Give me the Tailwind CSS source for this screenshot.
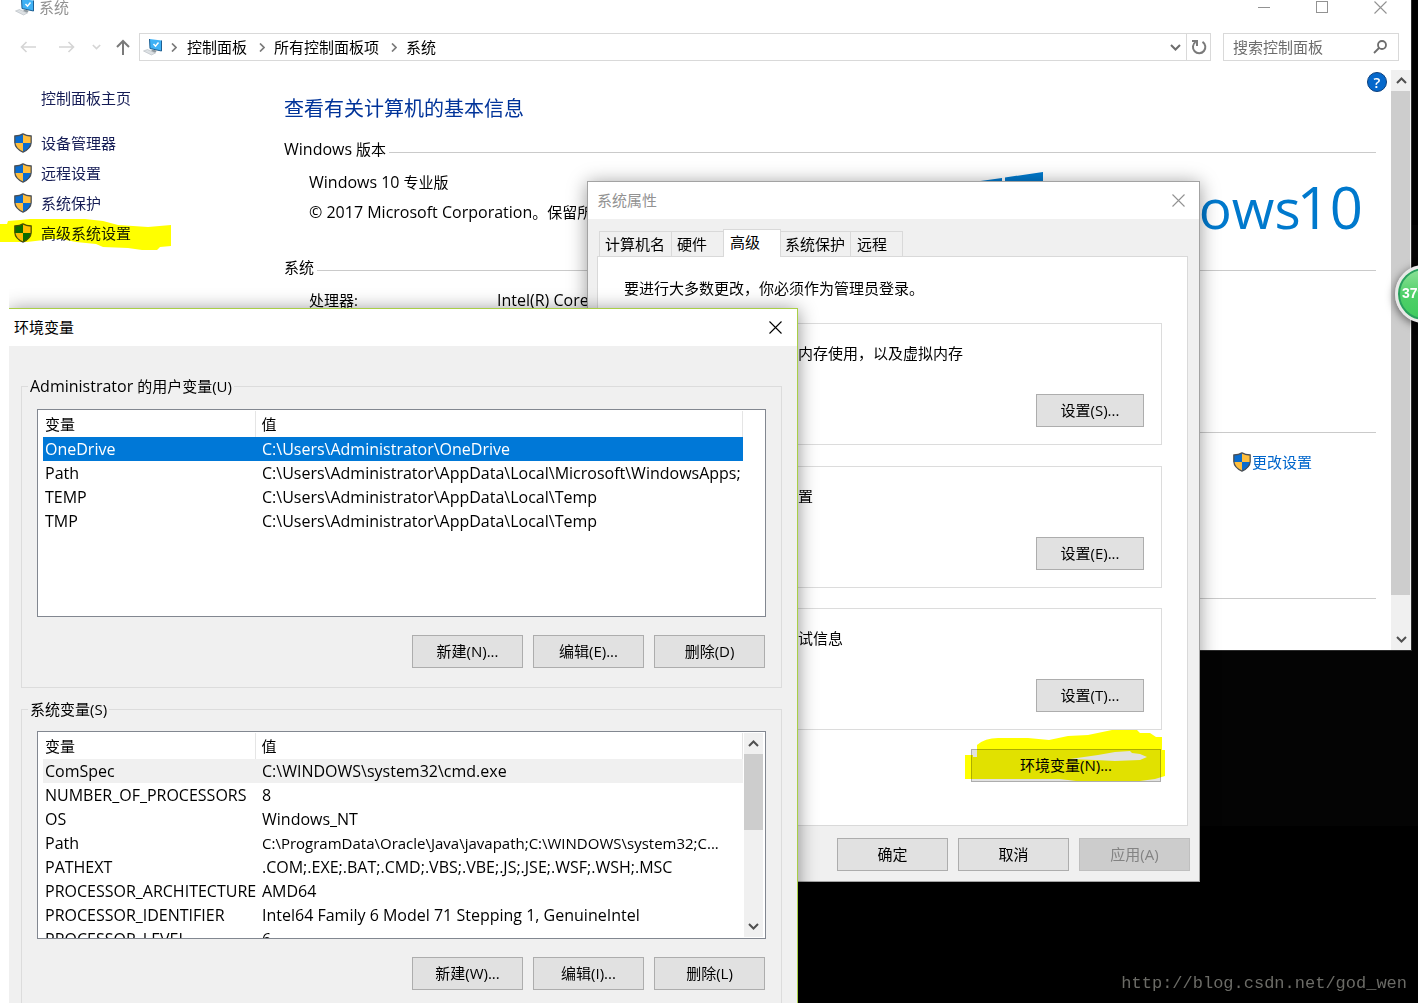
<!DOCTYPE html>
<html lang="zh-CN">
<head>
<meta charset="utf-8">
<title>系统</title>
<script src="https://cdn.jsdelivr.net/npm/@tailwindcss/browser@4"></script>
</head>
<body class="bg-black font-['Open_Sans','Noto_Sans_CJK_SC',sans-serif] text-[15px] leading-6 text-black">
<svg class="hidden" aria-hidden="true">
  <symbol id="shield" viewBox="0 0 20 22">
    <path d="M10 1C7.500 2.600 4.300 3.200 1 3.300v7.200C1.300 15.500 4.800 18.800 10 21c5.200-2.200 8.700-5.500 9-10.500V3.300C15.700 3.200 12.500 2.600 10 1z" fill="#ffbe3c"/>
    <path d="M10 1C7.500 2.600 4.300 3.200 1 3.300V11h9zM10 11v10c5.200-2.200 8.700-5 9-10z" fill="#0a6cce"/>
    <path d="M10 1C7.500 2.600 4.300 3.200 1 3.300v7.200C1.300 15.500 4.800 18.800 10 21c5.200-2.200 8.700-5.500 9-10.500V3.300C15.700 3.200 12.500 2.600 10 1z" fill="none" stroke="#4a4f55" stroke-width="1.400"/>
  </symbol>
  <symbol id="pc" viewBox="0 0 20 18">
    <path d="M6.500 1l12 1.500v10.500L7 10.500z" fill="#3fb1f5"/>
    <path d="M6.500 1l.5 9.500 11.500 2.500V2.500" fill="none" stroke="#1d5f93"/>
    <path d="M10.500 6l2 2.200 3-3.700" fill="none" stroke="#fff" stroke-width="1.400"/>
    <path d="M9 11.500l5 1-2 2.500-4-1.500z" fill="#8f999f"/>
    <path d="M.5 13l4-1.500 8 3.500-4 2z" fill="#dde1e4" stroke="#b3babf" stroke-width=".6"/>
  </symbol>
  <symbol id="cross" viewBox="0 0 13 13"><path d="M.5.5l12 12M12.500.5l-12 12" fill="none" stroke="currentColor" stroke-width="1.100"/></symbol>
  <symbol id="up" viewBox="0 0 11 7"><path d="M1 6l4.500-4.500L10 6" fill="none" stroke="currentColor" stroke-width="2"/></symbol>
  <symbol id="down" viewBox="0 0 11 7"><path d="M1 1l4.500 4.500L10 1" fill="none" stroke="currentColor" stroke-width="2"/></symbol>
  <symbol id="right" viewBox="0 0 6 9"><path d="M1 .5l4 4-4 4" fill="none" stroke="currentColor" stroke-width="1.700"/></symbol>
</svg>

<div class="relative min-h-screen overflow-hidden bg-black">
  <div class="absolute right-0 top-[225px] h-[601px] w-[620px] bg-[#040404]"></div>

  <!-- 系统 -->
  <section class="absolute left-0 right-[6px] top-0 flex h-[651px] flex-col border-b border-r border-[#2c2c2c] bg-white">
    <header class="flex h-[14px] shrink-0 items-center pl-[15px] text-[#929292]">
      <svg class="mr-1 h-[18px] w-5"><use href="#pc"/></svg>
      <h1>系统</h1>
      <div class="ml-auto flex items-center gap-[46px] pr-6">
        <button aria-label="最小化" class="h-px w-3 bg-[#929292]"></button>
        <button aria-label="最大化" class="size-3 border border-[#929292]"></button>
        <button aria-label="关闭" class="size-[13px]"><svg class="size-[13px]"><use href="#cross"/></svg></button>
      </div>
    </header>
    <nav class="mt-[19px] flex h-7 shrink-0 items-center pr-3">
      <button aria-label="后退" class="ml-5 text-[#d5d5d5]"><svg class="h-3 w-4" viewBox="0 0 16 12" fill="none" stroke="currentColor" stroke-width="1.600"><path d="M16 6H1.500M6.500 1l-5 5 5 5"/></svg></button>
      <button aria-label="前进" class="ml-[23px] text-[#d5d5d5]"><svg class="h-3 w-4" viewBox="0 0 16 12" fill="none" stroke="currentColor" stroke-width="1.600"><path d="M0 6h14.500M9.500 1l5 5-5 5"/></svg></button>
      <button aria-label="最近浏览" class="ml-[17px] text-[#d5d5d5]"><svg class="h-[6px] w-[9px]"><use href="#down"/></svg></button>
      <button aria-label="上移" class="ml-[15px] text-[#7a7a7a]"><svg class="h-4 w-[14px]" viewBox="0 0 14 16" fill="none" stroke="currentColor" stroke-width="2"><path d="M7 16V2M1 8l6-6 6 6"/></svg></button>
      <div class="ml-[9px] flex h-full flex-1 items-center border border-[#d9d9d9] pl-[3px]">
        <svg class="h-[18px] w-5 shrink-0"><use href="#pc"/></svg>
        <svg class="ml-2 h-[9px] w-[6px] text-[#7a7a7a]"><use href="#right"/></svg>
        <a href="#" class="ml-[10px] pb-px">控制面板</a>
        <svg class="ml-3 h-[9px] w-[6px] text-[#7a7a7a]"><use href="#right"/></svg>
        <a href="#" class="ml-[9px] pb-px">所有控制面板项</a>
        <svg class="ml-3 h-[9px] w-[6px] text-[#7a7a7a]"><use href="#right"/></svg>
        <a href="#" class="ml-[9px] pb-px">系统</a>
        <button aria-label="历史记录" class="ml-auto text-[#6d6d6d]"><svg class="h-[7px] w-[11px]"><use href="#down"/></svg></button>
        <button aria-label="刷新" class="ml-[5px] flex h-full w-6 items-center justify-center border-l border-[#d9d9d9] text-[#7a7a7a]">
          <svg class="size-4" viewBox="0 0 16 16" fill="none" stroke="currentColor" stroke-width="2"><path d="M11.500 2.800A6.200 6.200 0 1 1 4.500 3M1 2h5v5"/></svg>
        </button>
      </div>
      <label class="ml-3 flex h-full w-44 items-center border border-[#d9d9d9] pl-[9px] pr-[11px]">
        <input type="text" aria-label="搜索" placeholder="搜索控制面板" class="min-w-0 flex-1 placeholder:text-[#6d6d6d]">
        <svg class="size-[14px] text-[#6d6d6d]" viewBox="0 0 14 14" fill="none" stroke="currentColor" stroke-width="1.800"><circle cx="9" cy="5" r="4"/><path d="M6 8L1 13"/></svg>
      </label>
    </nav>

    <div class="mt-[9px] flex min-h-0 flex-1">
      <aside class="w-[284px] shrink-0 pt-4 text-[#151c55]">
        <a href="#" class="block pl-[41px]">控制面板主页</a>
        <ul class="mt-[18px]">
          <li><a href="#" class="flex h-[30px] items-center gap-2 pl-[13px]"><svg class="size-5"><use href="#shield"/></svg>设备管理器</a></li>
          <li><a href="#" class="flex h-[30px] items-center gap-2 pl-[13px]"><svg class="size-5"><use href="#shield"/></svg>远程设置</a></li>
          <li><a href="#" class="flex h-[30px] items-center gap-2 pl-[13px]"><svg class="size-5"><use href="#shield"/></svg>系统保护</a></li>
          <li class="relative">
            <a href="#" class="flex h-[30px] items-center gap-2 pl-[13px]"><svg class="size-5"><use href="#shield"/></svg>高级系统设置</a>
            <svg class="absolute left-0 top-0 h-8 w-44 mix-blend-multiply" viewBox="0 0 176 32" fill="#ff0"><path d="M0 6h7l1-3 12-1 10-1h55l18 2 15 4 30 2 23-2v21l-11 1-3 3h-15l-14-2-25-1-7-3-20-2-15-3H52l-25 3H0z"/></svg>
          </li>
        </ul>
      </aside>

      <main class="relative min-w-0 flex-1 pr-[15px] pt-6">
        <button aria-label="帮助" class="absolute right-1 top-[2px] size-5 rounded-full border border-[#0b3f7d] bg-[#0568cb] text-center text-[15px] font-semibold leading-[18px] text-white">?</button>
        <h2 class="h-[30px] text-xl leading-[30px] text-[#003399]">查看有关计算机的基本信息</h2>
        <h3 class="mt-[13px] flex items-center gap-[3px]"><span><span class="text-base">Windows</span> 版本</span><span class="mt-[7px] h-px flex-1 bg-[#cacaca]"></span></h3>
        <div class="mt-[6px] flex justify-between pl-[25px] pr-[13px] leading-[30px]">
          <div>
            <p><span class="text-base">Windows 10</span> 专业版</p>
            <p><span class="text-base">© 2017 Microsoft Corporation</span>。保留所有权利。</p>
          </div>
          <div class="flex h-[72px] items-center text-[#0079cd]">
            <svg class="mr-6 mt-[10px] h-[72px] w-[84px] shrink-0" viewBox="0 0 84 72" fill="#0079cd"><path d="M0 12L43 6v28H0zM46 5.500L84 0v34H46zM0 37h43v28L0 59zM46 37h38v34L46 66z"/></svg>
            <span class="mt-2 text-[55px] leading-none">Windows</span>
            <span class="-ml-1 mt-2 text-[58px] leading-none">10</span>
          </div>
        </div>
        <h3 class="mt-4 flex items-center gap-[3px]">系统<span class="mt-[7px] h-px flex-1 bg-[#cacaca]"></span></h3>
        <dl class="mt-[6px] flex pl-[25px] leading-[30px]">
          <dt class="w-[188px]">处理器:</dt><dd class="text-base leading-[30px]">Intel(R) Core</dd>
        </dl>
        <h3 class="mt-[102px] flex items-center gap-[3px]">计算机名、域和工作组设置<span class="mt-[7px] h-px flex-1 bg-[#cacaca]"></span></h3>
        <div class="mt-[6px] flex h-[30px] items-center justify-end pr-16">
          <a href="#" class="flex items-center text-[#0066cc]"><svg class="size-5"><use href="#shield"/></svg>更改设置</a>
        </div>
        <h3 class="mt-[106px] flex items-center gap-[3px]">Windows 激活<span class="mt-[7px] h-px flex-1 bg-[#cacaca]"></span></h3>
      </main>

      <div class="flex w-5 shrink-0 flex-col bg-[#f0f0f0] text-[#505050]">
        <button aria-label="向上滚动" class="flex h-[21px] shrink-0 items-center justify-center"><svg class="h-[7px] w-[11px]"><use href="#up"/></svg></button>
        <div class="mr-px h-[504px] bg-[#cdcdcd]"></div>
        <button aria-label="向下滚动" class="mt-auto flex h-[21px] shrink-0 items-center justify-center"><svg class="h-[7px] w-[11px]"><use href="#down"/></svg></button>
      </div>
    </div>
  </section>

  <!-- 系统属性 -->
  <section class="absolute left-[587px] top-[181px] flex w-[613px] flex-col border border-[#a3a3a3] bg-[#f0f0f0] shadow-[0_2px_18px_rgba(0,0,0,0.4)]">
    <header class="flex h-[37px] items-center justify-between bg-white pl-[9px] pr-[14px] text-[#929292]">
      <h2 class="pb-[2px]">系统属性</h2>
      <button aria-label="关闭" class="size-[13px]"><svg class="size-[13px]"><use href="#cross"/></svg></button>
    </header>
    <div class="pl-[9px] pr-[11px] pt-[10px]">
      <div role="tablist" class="flex h-[27px] items-end pl-[2px]">
        <button role="tab" class="h-[25px] w-[72px] border-l border-t border-[#d9d9d9] pl-[5px] text-left">计算机名</button>
        <button role="tab" class="h-[25px] w-[52px] border-l border-t border-[#d9d9d9] pl-[5px] text-left">硬件</button>
        <button role="tab" aria-selected="true" class="relative z-10 -mb-px h-7 w-[58px] border border-b-0 border-[#d9d9d9] bg-white pb-[3px] pl-[6px] text-left">高级</button>
        <button role="tab" class="h-[25px] w-[69px] border-t border-[#d9d9d9] pl-1 text-left">系统保护</button>
        <button role="tab" class="h-[25px] w-[53px] border-x border-t border-[#d9d9d9] pl-[6px] text-left">远程</button>
      </div>
      <div role="tabpanel" class="h-[570px] border border-[#d9d9d9] bg-white px-[25px] pt-[19px]">
        <p class="pl-px">要进行大多数更改，你必须作为管理员登录。</p>
        <fieldset class="mt-[11px] h-[134px] border border-[#dcdcdc] pl-[9px] pr-[17px]">
          <legend class="px-[2px]">性能</legend>
          <p class="mt-[6px]">视觉效果，处理器计划，内存使用，以及虚拟内存</p>
          <button class="ml-auto mt-[29px] block h-[33px] w-[108px] border border-[#adadad] bg-[#e1e1e1] pb-[2px]">设置(S)...</button>
        </fieldset>
        <fieldset class="mt-[9px] h-[134px] border border-[#dcdcdc] pl-[9px] pr-[17px]">
          <legend class="px-[2px]">用户配置文件</legend>
          <p class="mt-[6px]">与登录帐户相关的桌面设置</p>
          <button class="ml-auto mt-[29px] block h-[33px] w-[108px] border border-[#adadad] bg-[#e1e1e1] pb-[2px]">设置(E)...</button>
        </fieldset>
        <fieldset class="mt-2 h-[134px] border border-[#dcdcdc] pl-[9px] pr-[17px]">
          <legend class="px-[2px]">启动和故障恢复</legend>
          <p class="mt-[6px]">系统启动、系统故障和调试信息</p>
          <button class="ml-auto mt-[29px] block h-[33px] w-[108px] border border-[#adadad] bg-[#e1e1e1] pb-[2px]">设置(T)...</button>
        </fieldset>
        <div class="relative mt-[19px] flex justify-end pr-px">
          <button class="h-[33px] w-[190px] border border-[#adadad] bg-[#e1e1e1] pb-[2px]">环境变量(N)...</button>
          <svg class="absolute -right-1 -top-5 h-[54px] w-[202px] mix-blend-multiply" viewBox="964 729 202 54" fill="#ff0" fill-rule="evenodd"><path d="M977 757V745Q985 738 998 738H1028L1049 740 1068 736 1088 735 1112 730H1137L1140 733 1150 733 1156 737H1162V750H1165V776L1155 779 1140 781H1076L1060 779H965V755H973V757zM1070 759L1098 755 1115 752 1130 751 1132 753 1140 754 1147 757 1140 760 1115 761 1095 760z"/></svg>
        </div>
      </div>
      <div class="flex justify-end gap-[10px] pb-[10px] pt-3">
        <button class="h-[33px] w-[111px] border border-[#adadad] bg-[#e1e1e1] pb-[2px]">确定</button>
        <button class="h-[33px] w-[111px] border border-[#adadad] bg-[#e1e1e1] pb-[2px]">取消</button>
        <button disabled class="-mr-[2px] h-[33px] w-[111px] border border-[#bfbfbf] bg-[#cccccc] pb-[2px] text-[#838383]">应用(A)</button>
      </div>
    </div>
  </section>

  <!-- 环境变量 -->
  <section class="absolute bottom-0 left-[9px] top-[308px] flex w-[789px] flex-col border-r border-t border-[#a9cf46] bg-[#f0f0f0] shadow-[0_2px_18px_rgba(0,0,0,0.45)]">
    <header class="flex h-[37px] shrink-0 items-center justify-between bg-white pl-[5px] pr-[15px]">
      <h2 class="pb-[2px]">环境变量</h2>
      <button aria-label="关闭" class="size-[13px]"><svg class="size-[13px]"><use href="#cross"/></svg></button>
    </header>
    <fieldset class="ml-3 mr-[15px] mt-7 h-[314px] shrink-0 border border-[#dcdcdc] px-[15px]">
      <legend class="-ml-[9px] px-[2px]"><span class="text-base leading-6">Administrator</span> 的用户变量(U)</legend>
      <div class="mt-[11px] h-[208px] overflow-hidden border border-[#828790] bg-white pl-[5px] pt-px">
        <table class="w-[700px] table-fixed border-collapse whitespace-nowrap text-left">
          <thead><tr class="h-[26px]"><th class="w-[212px] border-r border-[#e5e5e5] pl-[2px] font-normal">变量</th><th class="border-r border-[#e5e5e5] pl-[6px] font-normal">值</th></tr></thead>
          <tbody class="text-base">
            <tr class="h-6 bg-[#0078d7] text-white"><td class="pl-[2px]">OneDrive</td><td class="pl-[7px]">C:\Users\Administrator\OneDrive</td></tr>
            <tr class="h-6"><td class="pl-[2px]">Path</td><td class="pl-[7px]">C:\Users\Administrator\AppData\Local\Microsoft\WindowsApps;</td></tr>
            <tr class="h-6"><td class="pl-[2px]">TEMP</td><td class="pl-[7px]">C:\Users\Administrator\AppData\Local\Temp</td></tr>
            <tr class="h-6"><td class="pl-[2px]">TMP</td><td class="pl-[7px]">C:\Users\Administrator\AppData\Local\Temp</td></tr>
          </tbody>
        </table>
      </div>
      <div class="mt-[18px] flex justify-end gap-[10px] pr-px">
        <button class="h-[33px] w-[111px] border border-[#adadad] bg-[#e1e1e1] pb-[2px]">新建(N)...</button>
        <button class="h-[33px] w-[111px] border border-[#adadad] bg-[#e1e1e1] pb-[2px]">编辑(E)...</button>
        <button class="h-[33px] w-[111px] border border-[#adadad] bg-[#e1e1e1] pb-[2px]">删除(D)</button>
      </div>
    </fieldset>
    <fieldset class="ml-3 mr-[15px] mt-[9px] min-h-0 flex-1 border border-b-0 border-[#dcdcdc] px-[15px]">
      <legend class="-ml-[9px] px-[2px]">系统变量(S)</legend>
      <div class="mt-[10px] flex h-[208px] justify-between overflow-hidden border border-[#828790] bg-white p-px pl-[5px] pr-[2px]">
        <div class="w-[700px]">
          <table class="w-[700px] table-fixed border-collapse whitespace-nowrap text-left">
            <thead><tr class="h-[26px]"><th class="w-[212px] border-r border-[#e5e5e5] pl-[2px] font-normal">变量</th><th class="border-r border-[#e5e5e5] pl-[6px] font-normal">值</th></tr></thead>
            <tbody class="text-base">
              <tr class="h-6 bg-[#f0f0f0]"><td class="pl-[2px]">ComSpec</td><td class="pl-[7px]">C:\WINDOWS\system32\cmd.exe</td></tr>
              <tr class="h-6"><td class="pl-[2px]">NUMBER_OF_PROCESSORS</td><td class="pl-[7px]">8</td></tr>
              <tr class="h-6"><td class="pl-[2px]">OS</td><td class="pl-[7px]">Windows_NT</td></tr>
              <tr class="h-6"><td class="pl-[2px]">Path</td><td class="pl-[7px] text-[15px]">C:\ProgramData\Oracle\Java\javapath;C:\WINDOWS\system32;C...</td></tr>
              <tr class="h-6"><td class="pl-[2px]">PATHEXT</td><td class="pl-[7px]">.COM;.EXE;.BAT;.CMD;.VBS;.VBE;.JS;.JSE;.WSF;.WSH;.MSC</td></tr>
              <tr class="h-6"><td class="pl-[2px]">PROCESSOR_ARCHITECTURE</td><td class="pl-[7px]">AMD64</td></tr>
              <tr class="h-6"><td class="pl-[2px]">PROCESSOR_IDENTIFIER</td><td class="pl-[7px]">Intel64 Family 6 Model 71 Stepping 1, GenuineIntel</td></tr>
              <tr class="h-6"><td class="pl-[2px]">PROCESSOR_LEVEL</td><td class="pl-[7px]">6</td></tr>
            </tbody>
          </table>
        </div>
        <div class="flex w-[19px] flex-col bg-[#f0f0f0] text-[#505050]">
          <button aria-label="向上滚动" class="flex h-[21px] items-center justify-center"><svg class="h-[7px] w-[11px]"><use href="#up"/></svg></button>
          <div class="h-[76px] bg-[#cdcdcd]"></div>
          <button aria-label="向下滚动" class="mt-auto flex h-[21px] items-center justify-center"><svg class="h-[7px] w-[11px]"><use href="#down"/></svg></button>
        </div>
      </div>
      <div class="mt-[18px] flex justify-end gap-[10px] pr-px">
        <button class="h-[33px] w-[111px] border border-[#adadad] bg-[#e1e1e1] pb-[2px]">新建(W)...</button>
        <button class="h-[33px] w-[111px] border border-[#adadad] bg-[#e1e1e1] pb-[2px]">编辑(I)...</button>
        <button class="h-[33px] w-[111px] border border-[#adadad] bg-[#e1e1e1] pb-[2px]">删除(L)</button>
      </div>
    </fieldset>
  </section>
  <div class="absolute bottom-0 left-0 top-[280px] w-[9px] bg-white"></div>

  <button class="absolute -right-[35px] top-[265px] size-[58px] rounded-full border-[3px] border-[#e8e8e8] bg-linear-to-b from-[#8fe29b] via-[#4fd069] to-[#3fcb5d] pb-[3px] pl-1 text-left font-['Liberation_Sans',sans-serif] text-sm font-bold text-white shadow-[-1px_2px_8px_rgba(0,0,0,0.5)] ring-2 ring-inset ring-[#2a9f5f]">37%</button>
  <p class="absolute bottom-[7px] right-[11px] font-['Liberation_Mono','Noto_Sans_CJK_SC',monospace] text-[17px] text-[#6b6b66]">http://blog.csdn.net/god_wen</p>
</div>
</body>
</html>
